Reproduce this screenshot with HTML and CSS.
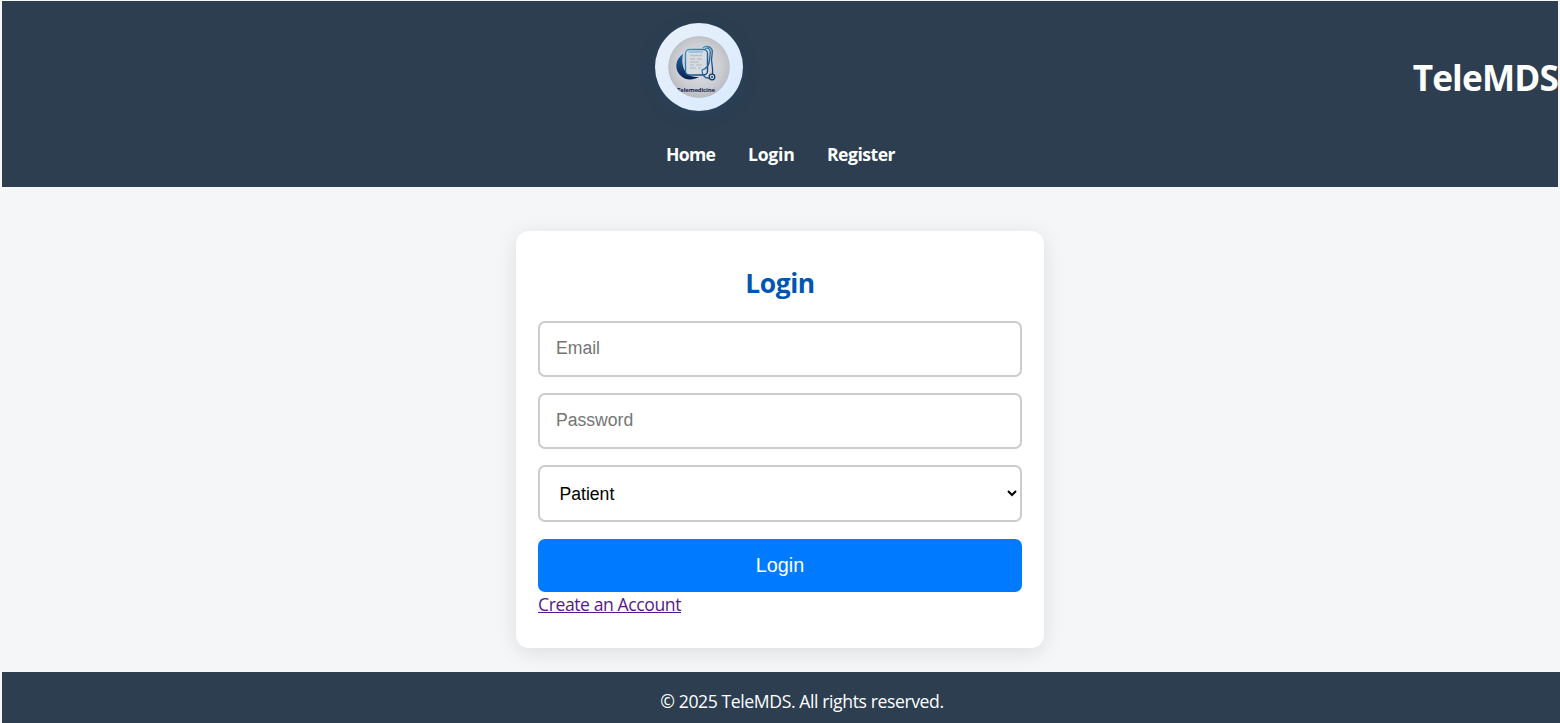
FILE: index.html
```html
<!DOCTYPE html>
<html lang="en">
<head>
<meta charset="utf-8">
<title>TeleMDS</title>
<link rel="stylesheet" href="styles.css">
</head>
<body>
<header class="site-header">
  <div class="brand">
    <div class="logo">
      <svg class="logo-art" viewBox="0 0 62 62" width="62" height="62">
        <defs>
          <radialGradient id="disc" cx="50%" cy="48%" r="58%"><stop offset="0" stop-color="#dcdee4"/><stop offset=".6" stop-color="#cdcfd4"/><stop offset="1" stop-color="#b3b6ba"/></radialGradient>
          <linearGradient id="ink" x1="0" y1="0" x2="1" y2="1"><stop offset="0" stop-color="#3f9ac8"/><stop offset="1" stop-color="#123a70"/></linearGradient>
          <linearGradient id="moon" x1="0" y1="0" x2="0" y2="1"><stop offset="0" stop-color="#1e659c"/><stop offset="1" stop-color="#09204f"/></linearGradient>
          <clipPath id="round"><circle cx="31" cy="31" r="31"/></clipPath>
        </defs>
        <g clip-path="url(#round)">
          <circle cx="31" cy="31" r="31" fill="url(#disc)"/>
          <path d="M15 18C7 23 6 34 13 40C18 45 26 44 31 41C22 42 16 36 15 30C14 26 14 22 15 18Z" fill="url(#moon)"/>
          <rect x="17.5" y="13.500" width="22" height="25.500" rx="4" fill="#d7dce3" stroke="url(#ink)" stroke-width="1.4"/>
          <path d="M20.500 16H35" fill="none" stroke="#5b9abf" stroke-width=".8"/>
          <path d="M22 20l2-1 2 1 3-1 2 1 3-1M22 23h5M29 23h5M22 26h9M22 29h4M28 29h6M22 32h6M30 32h3" fill="none" stroke="#9aa7b5" stroke-width=".7"/>
          <path d="M35 12C37 9.500 42 10 44 13.500C45 17 43.500 20 43.500 24C44 29 45 33 44.500 38M37 12.500C42 11 43 15 42 20L41 27C40 31 37 33 34 34C34 39 37 43 41.500 42" fill="none" stroke="url(#ink)" stroke-width="1.3"/>
          <circle cx="44" cy="41" r="2.800" fill="#d3dbe4" stroke="#123f71" stroke-width="1.300"/>
          <circle cx="44" cy="41" r="1" fill="#123f71"/>
          <text class="logo-word" x="9" y="55.500" textLength="38">Telemedicine</text>
        </g>
      </svg>
    </div>
    <h1 class="title">TeleMDS</h1>
  </div>
  <nav class="nav">
    <a class="nav-home" href="#">Home</a>
    <a class="nav-login" href="#">Login</a>
    <a class="nav-register" href="#">Register</a>
  </nav>
</header>
<main class="content">
  <form class="card">
    <h2 class="card-title"><span>Login</span></h2>
    <input class="field" type="email" placeholder="Email">
    <input class="field" type="password" placeholder="Password">
    <select class="field select"><option>Patient</option></select>
    <button class="submit" type="button">Login</button>
    <a class="create" href="#">Create an Account</a>
  </form>
</main>
<footer class="site-footer"><p class="copyright">© 2025 TeleMDS. All rights reserved.</p></footer>
</body>
</html>
```
FILE: styles.css
```css
* { box-sizing: border-box; }
body {
  margin: 0;
  padding: 1px 0 0 2px;
  height: 723px;
  overflow: hidden;
  display: flex;
  flex-direction: column;
  background: #f4f6f8;
  font-family: "Open Sans", "Noto Sans", sans-serif;
  font-size: 17.6px;
}
.site-header {
  width: 1556px;
  height: 186px;
  padding-top: 22px;
  background: #2c3e50;
  color: #fff;
}
.brand {
  display: flex;
  justify-content: space-between;
  height: 110px;
  padding-left: 653px;
}
.logo {
  width: 88px;
  height: 88px;
  padding: 13px;
  border-radius: 50%;
  background: linear-gradient(135deg, #e9f1fa, #d8eaff);
  box-shadow: 0 4px 16px rgba(30, 80, 130, .25);
}
.logo-art { display: block; }
.logo-word { font: 700 6px "Open Sans", sans-serif; fill: #17284e; }
.title {
  margin: 30px 0 0;
  font-size: 35.2px;
  line-height: 48px;
  font-weight: 700;
  letter-spacing: -.85px;
}
.nav {
  display: flex;
  padding-left: 664px;
  line-height: 42px;
  font-weight: 700;
}
.nav a { color: #fff; text-decoration: none; white-space: nowrap; letter-spacing: -.5px; }
.nav .nav-home { width: 82px; letter-spacing: -.7px; }
.nav .nav-login { width: 79px; letter-spacing: -.25px; }
.content {
  width: 1556px;
  height: 485px;
  padding-top: 44px;
}
.card {
  width: 528px;
  height: 417px;
  margin: 0 auto;
  padding: 33px 22px 0;
  display: flex;
  flex-direction: column;
  border-radius: 13px;
  background: #fff;
  box-shadow: 0 4px 22px rgba(0, 0, 0, .1);
}
.card > * { flex-shrink: 0; }
.card-title {
  margin: 0 0 19px;
  color: #0056b3;
  font-size: 26.4px;
  line-height: 38px;
  text-align: center;
  letter-spacing: -.4px;
}
.field {
  width: 484px;
  height: 56px;
  margin: 0 0 16px;
  padding: 0 16px 2px;
  border: 2px solid #ccc;
  border-radius: 7px;
  background: #fff;
  color: #000;
  font: 17.6px "Liberation Sans", Arial, sans-serif;
}
.field::placeholder { color: #757575; }
.select { height: 57px; margin-bottom: 17px; padding: 0 15px 0 15.5px; }
.submit {
  height: 53px;
  padding: 0;
  border: 0;
  border-radius: 7px;
  background: #007bff;
  color: #fff;
  font: 19.8px "Liberation Sans", Arial, sans-serif;
}
.create {
  align-self: flex-start;
  color: #551a8b;
  line-height: 25px;
  white-space: nowrap;
  letter-spacing: -.42px;
}
.site-footer {
  width: 1600px;
  height: 51px;
  background: #2c3e50;
  color: #fff;
}
.copyright { margin: 0; line-height: 58px; text-align: center; letter-spacing: -.4px; }
```
